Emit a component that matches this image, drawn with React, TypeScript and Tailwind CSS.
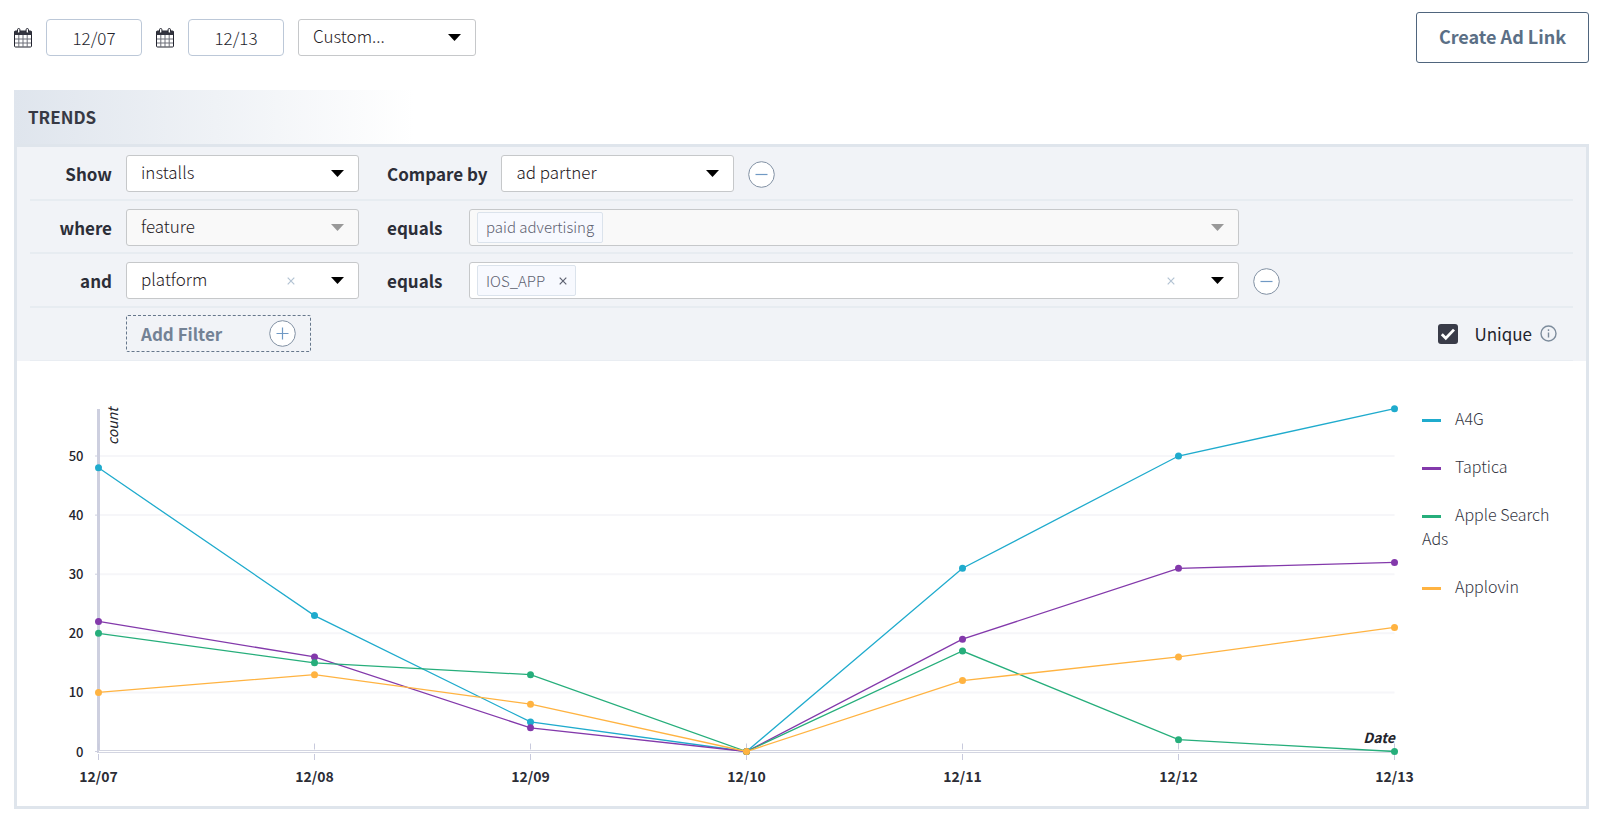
import type { ReactNode } from "react";

const DAYS = ["12/07", "12/08", "12/09", "12/10", "12/11", "12/12", "12/13"];

const SERIES = [
  { name: "A4G", color: "#1fabcd", values: [48, 23, 5, 0, 31, 50, 58] },
  { name: "Taptica", color: "#8339ab", values: [22, 16, 4, 0, 19, 31, 32] },
  { name: "Apple Search Ads", color: "#26ae7b", values: [20, 15, 13, 0, 17, 2, 0] },
  { name: "Applovin", color: "#ffb341", values: [10, 13, 8, 0, 12, 16, 21] },
];

const x = (i: number) => 81.5 + i * 216;
const y = (v: number) => 390.5 - v * 5.91;

function CalendarIcon() {
  return (
    <svg className="h-5 w-[18px] shrink-0" viewBox="0 0 18 20" aria-hidden="true">
      <path d="M1.5 3h15a1 1 0 0 1 1 1v14a1 1 0 0 1-1 1h-15a1 1 0 0 1-1-1V4a1 1 0 0 1 1-1z" fill="#fff" stroke="#23242f" />
      <path d="M.5 3h17v4H.5z" fill="#33343f" />
      <path d="M4.8 7v12M9 7v12M13.2 7v12M1 11h16M1 15h16" stroke="#6d6e78" fill="none" />
      <rect x="3.5" y=".5" width="2.4" height="4.6" rx="1.2" fill="#fff" stroke="#23242f" />
      <rect x="12.1" y=".5" width="2.4" height="4.6" rx="1.2" fill="#fff" stroke="#23242f" />
    </svg>
  );
}

function Arrow({ muted = false }: { muted?: boolean }) {
  return (
    <svg className="pointer-events-none h-[7px] w-[13px] shrink-0" viewBox="0 0 13 7" aria-hidden="true">
      <path d="M0 0h13L6.5 7z" fill={muted ? "#999" : "#000"} />
    </svg>
  );
}

function Cross({ className }: { className: string }) {
  return (
    <svg className={className} viewBox="0 0 8 8" aria-hidden="true">
      <path d="M.7.7l6.6 6.6M7.3.7L.7 7.3" stroke="currentColor" strokeWidth="1.2" fill="none" />
    </svg>
  );
}

function CircleIcon({ plus = false }: { plus?: boolean }) {
  return (
    <svg className="size-[27px] shrink-0" viewBox="0 0 27 27" aria-hidden="true">
      <circle cx="13.5" cy="13.5" r="12.8" fill="#fff" stroke="#8190a3" />
      <path d={plus ? "M7.5 13.5h12M13.5 7.5v12" : "M7.5 13.5h12"} stroke="#7099c4" strokeWidth="1.2" fill="none" />
    </svg>
  );
}

type PickProps = { id: string; label: string; value: string; width: string; disabled?: boolean; clearable?: boolean };

function Pick({ id, label, value, width, disabled = false, clearable = false }: PickProps) {
  return (
    <div className={`relative shrink-0 ${width}`}>
      <select
        id={id}
        aria-label={label}
        disabled={disabled}
        className="h-[37px] w-full appearance-none rounded-[3px] border border-[#c6c8ca] bg-white px-[14px] pb-1 text-[17px] font-light text-[#1f2024] opacity-100 disabled:bg-[#f9f9f9]"
      >
        <option>{value}</option>
      </select>
      <div className="pointer-events-none absolute inset-y-0 right-[15px] flex items-center gap-9">
        {clearable && <Cross className="size-2 text-[#b3c3d3]" />}
        <Arrow muted={disabled} />
      </div>
    </div>
  );
}

function Tags({ disabled = false, label, children }: { disabled?: boolean; label: string; children: ReactNode }) {
  return (
    <div
      role="group"
      aria-label={label}
      className={`flex h-[37px] w-[770px] items-center rounded-[3px] border border-[#c6c8ca] pr-[14px] pl-[7px] ${disabled ? "bg-[#f9f9f9]" : "bg-white"}`}
    >
      <span className="flex h-[31px] items-center rounded-[2px] border border-[#dbe3ec] bg-[#f7f9fe] px-2 text-[15px] font-light text-[#5d6170]">
        {children}
      </span>
      <span className="flex-1" />
      {!disabled && (
        <button type="button" aria-label="Clear all" className="mr-9">
          <Cross className="size-2 text-[#b3c3d3]" />
        </button>
      )}
      <button type="button" aria-label="Open options" disabled={disabled}>
        <Arrow muted={disabled} />
      </button>
    </div>
  );
}

const ROW = "mx-[13px] flex items-center gap-[14px] border-b-2 border-[#e7ecf1] pt-[2px]";
const LABEL = "w-[82px] shrink-0 text-right text-[17px] font-bold text-[#2c2e38]";
const MID = "ml-[14px] min-w-[68px] shrink-0 text-[17px] font-bold text-[#2c2e38]";
const DATE = "h-[37px] w-24 rounded-[4px] border border-[#bcc8d8] text-center text-[17px] font-light";

function Chart() {
  return (
    <svg className="block h-auto min-w-0 flex-1" viewBox="0 0 1403 445" role="img" aria-label="Installs per day by ad partner">
      {[10, 20, 30, 40, 50].map((v) => (
        <path key={v} d={`M81.5 ${y(v)}H1377.5`} stroke="#f6f6f9" strokeWidth="2" />
      ))}
      <path d="M81.5 48V392" stroke="#cdcfdf" strokeWidth="3" />
      <rect x="81.5" y="389.5" width="1296" height="2" fill="#fff" stroke="#d3d5e1" />
      {[0, 10, 20, 30, 40, 50].map((v) => (
        <g key={v}>
          <path d={`M78 ${y(v)}h4`} stroke="#cdcfdf" />
          <text x="66.5" y={y(v) + 5} textAnchor="end" className="fill-[#23242c] text-[13px] font-medium">
            {v}
          </text>
        </g>
      ))}
      {DAYS.map((d, i) => (
        <g key={d}>
          <path d={`M${x(i)} 382.5v6M${x(i)} 393v6`} stroke="#c8cadd" />
          <text x={x(i)} y="421" textAnchor="middle" className="fill-[#2c2d36] text-sm font-bold">
            {d}
          </text>
        </g>
      ))}
      <text transform="translate(101 84) rotate(-90)" className="fill-[#23242c] text-sm italic">
        count
      </text>
      <text x="1378" y="382" textAnchor="end" className="fill-[#23242c] text-sm font-bold italic">
        Date
      </text>
      {SERIES.map((s) => (
        <g key={s.name}>
          <polyline points={s.values.map((v, i) => `${x(i)},${y(v)}`).join(" ")} fill="none" stroke={s.color} strokeWidth="1.3" />
          {s.values.map((v, i) => (
            <circle key={i} cx={x(i)} cy={y(v)} r="3.5" fill={s.color} />
          ))}
        </g>
      ))}
    </svg>
  );
}

export default function App() {
  return (
    <main className="min-h-screen bg-white pt-3 pr-[11px] pb-[10px] pl-[14px] font-['Noto_Sans_CJK_SC','Noto_Sans',sans-serif] text-base text-[#23242c]">
      <header className="flex items-start justify-between">
        <div className="flex items-center gap-[14px] pt-[7px]">
          <label htmlFor="from" aria-label="Start date">
            <CalendarIcon />
          </label>
          <input id="from" defaultValue="12/07" className={DATE} />
          <label htmlFor="to" aria-label="End date">
            <CalendarIcon />
          </label>
          <input id="to" defaultValue="12/13" className={DATE} />
          <Pick id="range" label="Date range" value="Custom..." width="w-[178px]" />
        </div>
        <button type="button" className="h-[51px] w-[173px] rounded-[3px] border border-[#4f657d] pb-1 text-lg font-bold text-[#5b6f86]">
          Create Ad Link
        </button>
      </header>

      <section className="mt-[27px]">
        <h2 className="flex h-[54px] w-[400px] items-center bg-linear-to-r from-[#dfe5ed] to-white pl-[14px] text-[17px] font-bold text-[#373944]">
          TRENDS
        </h2>
        <div className="border-[3px] border-[#dfe5ec]">
          <form className="grid h-[214px] grid-rows-4 bg-[#f1f3f7]">
            <div className={ROW}>
              <label htmlFor="metric" className={LABEL}>Show</label>
              <Pick id="metric" label="Show" value="installs" width="w-[233px]" />
              <label htmlFor="compare" className={MID}>Compare by</label>
              <Pick id="compare" label="Compare by" value="ad partner" width="w-[233px]" />
              <button type="button" aria-label="Remove comparison" className="pt-[2px]"><CircleIcon /></button>
            </div>
            <div className={ROW}>
              <label htmlFor="where" className={LABEL}>where</label>
              <Pick id="where" label="where" value="feature" width="w-[233px]" disabled />
              <span className={MID}>equals</span>
              <Tags label="Feature values" disabled>paid advertising</Tags>
            </div>
            <div className={ROW}>
              <label htmlFor="and" className={LABEL}>and</label>
              <Pick id="and" label="and" value="platform" width="w-[233px]" clearable />
              <span className={MID}>equals</span>
              <Tags label="Platform values">
                IOS_APP
                <button type="button" aria-label="Remove IOS_APP" className="ml-[14px]">
                  <Cross className="size-2" />
                </button>
              </Tags>
              <button type="button" aria-label="Remove filter" className="pt-[2px]"><CircleIcon /></button>
            </div>
            <div className="mx-[13px] flex items-center justify-between border-b border-[#e9edf2] pr-4 pl-24">
              <button
                type="button"
                className="flex h-[37px] w-[185px] items-center justify-between rounded-[2px] border border-dashed border-[#66778c] px-[14px] text-[17px] font-bold text-[#738295]"
              >
                Add Filter
                <CircleIcon plus />
              </button>
              <div className="flex items-center">
                <label className="flex items-center gap-4 text-[17px]">
                  <span className="relative flex size-5">
                    <input type="checkbox" defaultChecked className="size-5 appearance-none rounded-[3px] bg-[#393b48]" />
                    <svg className="pointer-events-none absolute inset-0" viewBox="0 0 20 20" aria-hidden="true">
                      <path d="M3.8 10.2l4 4L16 5.6" stroke="#fff" strokeWidth="2.8" fill="none" />
                    </svg>
                  </span>
                  Unique
                </label>
                <svg className="ml-2 size-[17px]" viewBox="0 0 17 17" aria-hidden="true">
                  <circle cx="8.5" cy="8.5" r="7.5" fill="none" stroke="#7d8c9c" strokeWidth="1.4" />
                  <path d="M8.5 7.5v5M8.5 4.3v1.6" stroke="#7d8c9c" strokeWidth="1.4" />
                </svg>
              </div>
            </div>
          </form>
          <div className="flex items-start">
            <Chart />
            <ul className="w-[166px] shrink-0 pt-[45px] pr-4 pl-[2px]">
              {SERIES.map((s) => (
                <li key={s.name} className="mb-6 text-base leading-6 font-light text-[#33353f]">
                  <svg className="mr-[14px] inline-block h-[3px] w-[19px]" viewBox="0 0 19 3" aria-hidden="true">
                    <path d="M0 1.5h19" stroke={s.color} strokeWidth="3" />
                  </svg>
                  {s.name}
                </li>
              ))}
            </ul>
          </div>
        </div>
      </section>
    </main>
  );
}
